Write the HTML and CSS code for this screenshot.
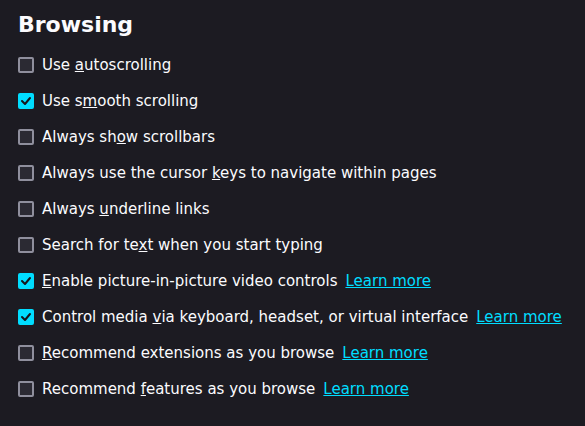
FILE: index.html
```html
<!DOCTYPE html>
<html>
<head>
<meta charset="utf-8">
<link rel="stylesheet" href="styles.css">
</head>
<body>
<section class="group">
  <h1 class="title">Browsing</h1>
  <div class="rows">
    <label class="row"><span class="box"></span><span class="label">Use <u>a</u>utoscrolling</span></label>
    <label class="row"><span class="box checked"><svg viewBox="0 0 16 16" width="16" height="16"><polyline points="4,8 7,11 12,5" /></svg></span><span class="label">Use s<u>m</u>ooth scrolling</span></label>
    <label class="row"><span class="box"></span><span class="label">Always sh<u>o</u>w scrollbars</span></label>
    <label class="row"><span class="box"></span><span class="label">Always use the cursor <u>k</u>eys to navigate within pages</span></label>
    <label class="row"><span class="box"></span><span class="label">Always <u>u</u>nderline links</span></label>
    <label class="row"><span class="box"></span><span class="label">Search for te<u>x</u>t when you start typing</span></label>
    <label class="row"><span class="box checked"><svg viewBox="0 0 16 16" width="16" height="16"><polyline points="4,8 7,11 12,5" /></svg></span><span class="label"><u>E</u>nable picture-in-picture video controls</span><a class="learn" href="#">Learn more</a></label>
    <label class="row"><span class="box checked"><svg viewBox="0 0 16 16" width="16" height="16"><polyline points="4,8 7,11 12,5" /></svg></span><span class="label">Control media <u>v</u>ia keyboard, headset, or virtual interface</span><a class="learn" href="#">Learn more</a></label>
    <label class="row"><span class="box"></span><span class="label"><u>R</u>ecommend extensions as you browse</span><a class="learn" href="#">Learn more</a></label>
    <label class="row"><span class="box"></span><span class="label">Recommend <u>f</u>eatures as you browse</span><a class="learn" href="#">Learn more</a></label>
  </div>
</section>
</body>
</html>
```

FILE: styles.css
```css
html, body {
  margin: 0;
  background: #1c1b22;
}
body {
  padding: 11px 18px;
  font-family: "DejaVu Sans", sans-serif;
  font-size: 15px;
  color: #fbfbfe;
}
.title {
  margin: 0 0 8px;
  font-size: 22px;
  line-height: 28px;
  font-weight: bold;
}
.rows {
  display: flex;
  flex-direction: column;
}
.row {
  display: flex;
  align-items: center;
  height: 36px;
}
.box {
  box-sizing: border-box;
  width: 16px;
  height: 16px;
  border: 2px solid #8f8f9d;
  border-radius: 2px;
  background: #2b2a33;
  margin-right: 8px;
  flex: none;
  position: relative;
}
.box.checked {
  background: #00ddff;
  border-color: #00ddff;
}
.box svg {
  position: absolute;
  left: -2px;
  top: -2px;
  fill: none;
  stroke: #15141a;
  stroke-width: 2;
  stroke-linecap: round;
  stroke-linejoin: round;
}
.label u {
  text-decoration-thickness: 1px;
}
.learn {
  margin-left: 8px;
  color: #00ddff;
  text-decoration: underline;
  text-decoration-thickness: 1px;
}
```
